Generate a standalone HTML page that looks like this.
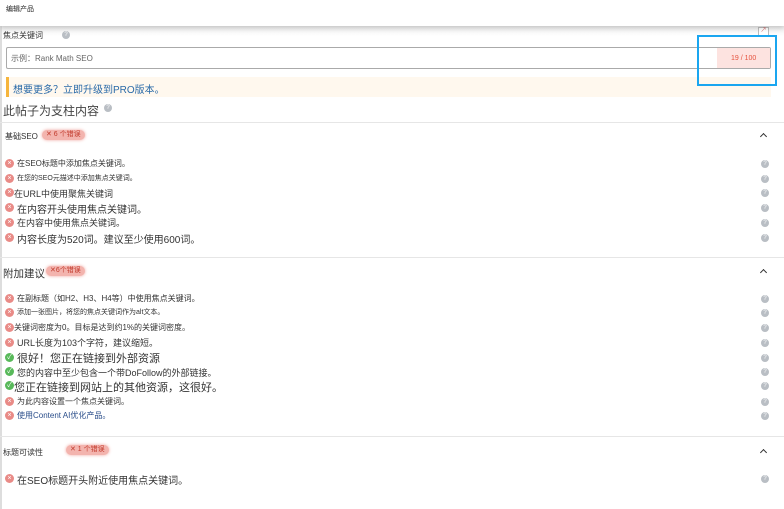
<!DOCTYPE html>
<html><head><meta charset="utf-8"><style>
*{margin:0;padding:0;box-sizing:border-box}
body{width:784px;height:509px;overflow:hidden;background:#fff;font-family:"Liberation Sans","Noto Sans CJK SC",sans-serif;color:#333;position:relative}
.a{position:absolute;white-space:nowrap}
.top{position:absolute;left:0;top:0;width:784px;height:26px;background:#fff;box-shadow:0 2px 5px rgba(0,0,0,.18);z-index:2}
.q{position:absolute;width:8px;height:8px;border-radius:50%;background:#b9bec4;color:#fff;font-size:6px;line-height:8px;text-align:center}
.x,.ok{position:absolute;width:9px;height:9px;border-radius:50%;color:#fff;font-size:7px;line-height:9px;text-align:center;left:5px}
.x{background:#e98b87}.ok{background:#58b95a}
.hr{position:absolute;left:0;width:784px;height:1px;background:#e6e6e6}
.badge{position:absolute;height:10px;border-radius:5px;background:#f3b4ae;color:#c1392b;font-size:7px;line-height:10px;padding:0 4px;box-shadow:0 0 3px #f0a49d}
.chev{position:absolute;left:761px;width:5px;height:5px;border-left:1.5px solid #333;border-top:1.5px solid #333;transform:rotate(45deg)}
</style></head><body>
<div class="top"><div class="a" style="left:6px;top:4px;font-size:7px;color:#222">编辑产品</div></div>
<div style="position:absolute;left:0;top:26px;width:784px;height:10px;background:linear-gradient(#eee,#fff)"></div>
<div style="position:absolute;left:0;top:26px;width:2px;height:483px;background:#ddd"></div>
<div class="a" style="left:3px;top:30px;font-size:8px">焦点关键词</div>
<div class="q" style="left:62px;top:31px">?</div>
<div style="position:absolute;left:758px;top:27px;width:11px;height:9px;border:1px solid #bbb;background:#fff;font-size:6px;color:#c55;line-height:7px;text-align:center">↗</div>
<div style="position:absolute;left:6px;top:47px;width:765px;height:22px;border:1px solid #aaa;border-radius:2px;background:#fff"></div>
<div class="a" style="left:11px;top:53px;font-size:8px;color:#666">示例：Rank Math SEO</div>
<div style="position:absolute;left:717px;top:48px;width:53px;height:20px;background:#fde3e0"></div>
<div class="a" style="left:731px;top:55px;font-size:7px;color:#e5533f">19 / 100</div>
<div style="position:absolute;left:697px;top:35px;width:80px;height:51px;border:2px solid #1aa6f0;z-index:3"></div>
<div style="position:absolute;left:6px;top:77px;width:765px;height:20px;background:#fff8ee;border-left:3px solid #f6b53c"></div>
<div class="a" style="left:13px;top:81px;font-size:10px;color:#2a6aa8">想要更多？立即升级到PRO版本。</div>
<div class="a" style="left:3px;top:102px;font-size:12px;color:#444">此帖子为支柱内容</div>
<div class="q" style="left:104px;top:104px">?</div>
<div class="hr" style="top:122px"></div>
<div class="a" style="left:5px;top:131px;font-size:8px">基础SEO</div>
<div class="badge" style="left:42px;top:130px">✕ 6 个错误</div>
<div class="chev" style="top:134px"></div>
<div class="x" style="top:159px">×</div><div class="a" style="left:17px;top:158px;font-size:8px">在SEO标题中添加焦点关键词。</div>
<div class="x" style="top:174px">×</div><div class="a" style="left:17px;top:173px;font-size:7px">在您的SEO元描述中添加焦点关键词。</div>
<div class="x" style="top:188px">×</div><div class="a" style="left:14px;top:187px;font-size:9px">在URL中使用聚焦关键词</div>
<div class="x" style="top:203px">×</div><div class="a" style="left:17px;top:201px;font-size:10px">在内容开头使用焦点关键词。</div>
<div class="x" style="top:218px">×</div><div class="a" style="left:17px;top:216px;font-size:9px">在内容中使用焦点关键词。</div>
<div class="x" style="top:233px">×</div><div class="a" style="left:17px;top:231px;font-size:10px">内容长度为520词。建议至少使用600词。</div>
<div class="hr" style="top:257px"></div>
<div class="a" style="left:3px;top:266px;font-size:10.5px">附加建议</div>
<div class="badge" style="left:46px;top:266px">✕6个错误</div>
<div class="chev" style="top:270px"></div>
<div class="x" style="top:294px">×</div><div class="a" style="left:17px;top:293px;font-size:8px">在副标题（如H2、H3、H4等）中使用焦点关键词。</div>
<div class="x" style="top:308px">×</div><div class="a" style="left:17px;top:307px;font-size:7px">添加一张图片，将您的焦点关键词作为alt文本。</div>
<div class="x" style="top:323px">×</div><div class="a" style="left:14px;top:322px;font-size:8px">关键词密度为0。目标是达到约1%的关键词密度。</div>
<div class="x" style="top:338px">×</div><div class="a" style="left:17px;top:336px;font-size:9px">URL长度为103个字符，建议缩短。</div>
<div class="ok" style="top:353px">✓</div><div class="a" style="left:17px;top:350px;font-size:11px">很好！您正在链接到外部资源</div>
<div class="ok" style="top:367px">✓</div><div class="a" style="left:17px;top:366px;font-size:9px">您的内容中至少包含一个带DoFollow的外部链接。</div>
<div class="ok" style="top:381px">✓</div><div class="a" style="left:14px;top:379px;font-size:11px">您正在链接到网站上的其他资源，这很好。</div>
<div class="x" style="top:397px">×</div><div class="a" style="left:17px;top:396px;font-size:8px">为此内容设置一个焦点关键词。</div>
<div class="x" style="top:411px">×</div><div class="a" style="left:17px;top:410px;font-size:8px;color:#2a4d8a">使用Content AI优化产品。</div>
<div class="hr" style="top:436px"></div>
<div class="a" style="left:3px;top:447px;font-size:8px">标题可读性</div>
<div class="badge" style="left:66px;top:445px">✕ 1 个错误</div>
<div class="chev" style="top:450px"></div>
<div class="x" style="top:474px">×</div><div class="a" style="left:17px;top:472px;font-size:10px">在SEO标题开头附近使用焦点关键词。</div>
<div class="q" style="left:761px;top:160px">?</div><div class="q" style="left:761px;top:175px">?</div><div class="q" style="left:761px;top:189px">?</div>
<div class="q" style="left:761px;top:204px">?</div><div class="q" style="left:761px;top:219px">?</div><div class="q" style="left:761px;top:234px">?</div>
<div class="q" style="left:761px;top:295px">?</div><div class="q" style="left:761px;top:309px">?</div><div class="q" style="left:761px;top:324px">?</div>
<div class="q" style="left:761px;top:339px">?</div><div class="q" style="left:761px;top:354px">?</div><div class="q" style="left:761px;top:368px">?</div>
<div class="q" style="left:761px;top:382px">?</div><div class="q" style="left:761px;top:398px">?</div><div class="q" style="left:761px;top:412px">?</div>
<div class="q" style="left:761px;top:475px">?</div>
</body></html>
